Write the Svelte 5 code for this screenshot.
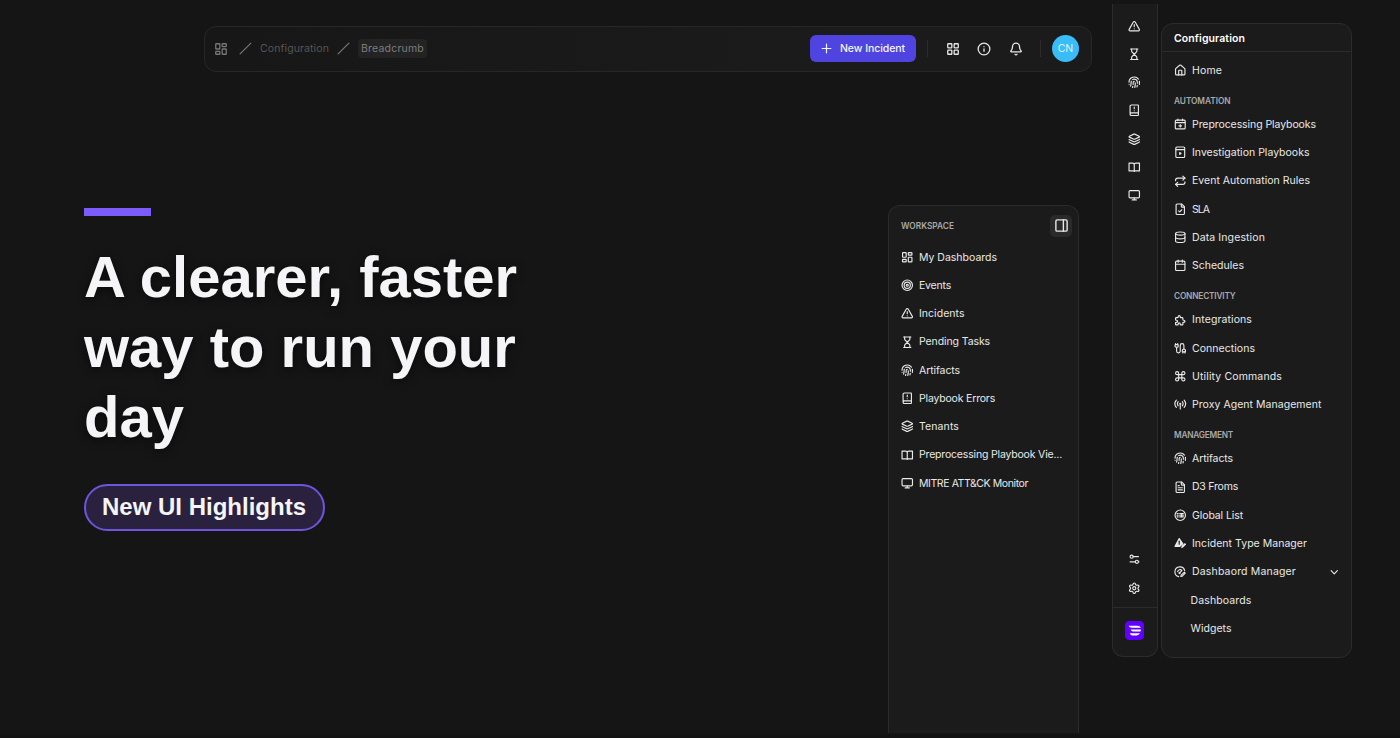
<script lang="ts">
	interface Item {
		icon?: string;
		label: string;
		width: number;
		chevron?: boolean;
	}

	interface Group {
		title?: string;
		titleWidth?: number;
		items: Item[];
	}

	const icons: Record<string, string> = {
		dashboard:
			'<rect width="7" height="9" x="3" y="3" rx="1"/><rect width="7" height="5" x="14" y="3" rx="1"/><rect width="7" height="9" x="14" y="12" rx="1"/><rect width="7" height="5" x="3" y="16" rx="1"/>',
		grid: '<rect width="7" height="7" x="3" y="3" rx="1"/><rect width="7" height="7" x="14" y="3" rx="1"/><rect width="7" height="7" x="14" y="14" rx="1"/><rect width="7" height="7" x="3" y="14" rx="1"/>',
		slash: '<path d="M22 2 2 22"/>',
		plus: '<path d="M4 12h16M12 4v16"/>',
		info: '<circle cx="12" cy="12" r="10"/><path d="M12 16v-4M12 8h.01"/>',
		bell: '<path d="M10.27 21a2 2 0 0 0 3.46 0"/><path d="M3.26 15.33A1 1 0 0 0 4 17h16a1 1 0 0 0 .74-1.67C19.41 13.96 18 12.5 18 8A6 6 0 0 0 6 8c0 4.5-1.41 5.96-2.74 7.33"/>',
		panel: '<rect width="18" height="18" x="3" y="3" rx="2"/><path d="M15 3v18"/>',
		target: '<circle cx="12" cy="12" r="10"/><circle cx="12" cy="12" r="6"/><circle cx="12" cy="12" r="2"/>',
		alert: '<path d="m21.73 18-8-14a2 2 0 0 0-3.48 0l-8 14A2 2 0 0 0 4 21h16a2 2 0 0 0 1.73-3"/><path d="M12 9v4M12 17h.01"/>',
		hourglass:
			'<path d="M5 22h14M5 2h14"/><path d="M17 22v-4.17a2 2 0 0 0-.59-1.42L12 12l-4.41 4.41A2 2 0 0 0 7 17.83V22M7 2v4.17a2 2 0 0 0 .59 1.42L12 12l4.41-4.41A2 2 0 0 0 17 6.17V2"/>',
		fingerprint:
			'<path d="M12 10a2 2 0 0 0-2 2c0 1.02-.1 2.51-.26 4"/><path d="M14 13.12c0 2.38 0 6.38-1 8.88"/><path d="M17.29 21.02c.12-.6.43-2.3.5-3.02"/><path d="M2 12a10 10 0 0 1 18-6"/><path d="M2 16h.01"/><path d="M21.8 16c.2-2 .131-5.354 0-6"/><path d="M5 19.5C5.5 18 6 15 6 12a6 6 0 0 1 .34-2"/><path d="M8.65 22c.21-.66.45-1.32.57-2"/><path d="M9 6.8a6 6 0 0 1 9 5.2v2"/>',
		bookAlert:
			'<path d="M12 13h.01M12 6v3"/><path d="M4 19.5v-15A2.5 2.5 0 0 1 6.5 2H19a1 1 0 0 1 1 1v18a1 1 0 0 1-1 1H6.5a1 1 0 0 1 0-5H20"/>',
		layers: '<path d="M12.83 2.18a2 2 0 0 0-1.66 0L2.6 6.08a1 1 0 0 0 0 1.83l8.58 3.91a2 2 0 0 0 1.66 0l8.58-3.9a1 1 0 0 0 0-1.83z"/><path d="M2 12a1 1 0 0 0 .58.91l8.6 3.91a2 2 0 0 0 1.65 0l8.58-3.9A1 1 0 0 0 22 12"/><path d="M2 17a1 1 0 0 0 .58.91l8.6 3.91a2 2 0 0 0 1.65 0l8.58-3.9A1 1 0 0 0 22 17"/>',
		book: '<path d="M12 6v14M2 4h7a3 3 0 0 1 3 3v13a2 2 0 0 0-2-1H2ZM22 4h-7a3 3 0 0 0-3 3v13a2 2 0 0 1 2-1h8Z"/>',
		monitor: '<rect width="20" height="14" x="2" y="3" rx="2"/><path d="M8 21h8M12 17v4"/>',
		home: '<path d="M15 21v-8a1 1 0 0 0-1-1h-4a1 1 0 0 0-1 1v8"/><path d="M3 10a2 2 0 0 1 .71-1.53l7-6a2 2 0 0 1 2.58 0l7 6A2 2 0 0 1 21 10v9a2 2 0 0 1-2 2H5a2 2 0 0 1-2-2z"/>',
		calendarPlay:
			'<rect width="19" height="17" x="2.500" y="4" rx="2"/><path d="M7.500 2v3M16.500 2v3M3 9h18"/><path d="M12 12.500v5M9.500 15h5"/>',
		bookPlay:
			'<rect width="17" height="20" x="3.500" y="2" rx="2"/><path d="M4 7h16"/><path d="m11 12.500 2.500 1.800-2.500 1.700z" fill="currentColor"/>',
		repeat: '<path d="m17 2 4 4-4 4"/><path d="M3 11v-1a4 4 0 0 1 4-4h14"/><path d="m7 22-4-4 4-4"/><path d="M21 13v1a4 4 0 0 1-4 4H3"/>',
		fileCheck:
			'<path d="M15 2H6a2 2 0 0 0-2 2v16a2 2 0 0 0 2 2h12a2 2 0 0 0 2-2V7Z"/><path d="M14 2v4a2 2 0 0 0 2 2h4"/><path d="m9 15 2 2 4-4"/>',
		database:
			'<ellipse cx="12" cy="5" rx="9" ry="3"/><path d="M3 5v14a9 3 0 0 0 18 0V5"/><path d="M3 12a9 3 0 0 0 18 0"/>',
		calendar: '<rect width="18" height="18" x="3" y="4" rx="2"/><path d="M8 2v4M16 2v4M3 10h18"/>',
		puzzle: '<path d="M4 7h3a1 1 0 0 0 1-1V5a2 2 0 0 1 4 0v1a1 1 0 0 0 1 1h3a1 1 0 0 1 1 1v3a1 1 0 0 0 1 1h1a2 2 0 0 1 0 4h-1a1 1 0 0 0-1 1v3a1 1 0 0 1-1 1h-3a1 1 0 0 1-1-1v-1a2 2 0 0 0-4 0v1a1 1 0 0 1-1 1H4a1 1 0 0 1-1-1v-3a1 1 0 0 1 1-1h1a2 2 0 0 0 0-4H4a1 1 0 0 1-1-1V8a1 1 0 0 1 1-1"/>',
		cable: '<path d="M17 19a1 1 0 0 1-1-1v-2a2 2 0 0 1 2-2h2a2 2 0 0 1 2 2v2a1 1 0 0 1-1 1z"/><path d="M17 21v-2M21 21v-2M3 5V3M7 5V3"/><path d="M19 14V6.500a3.500 3.500 0 0 0-7 0v11a3.500 3.500 0 0 1-7 0V10"/><path d="M4 10a2 2 0 0 1-2-2V6a1 1 0 0 1 1-1h4a1 1 0 0 1 1 1v2a2 2 0 0 1-2 2z"/>',
		command: '<path d="M15 6v12a3 3 0 1 0 3-3H6a3 3 0 1 0 3 3V6a3 3 0 1 0-3 3h12a3 3 0 1 0-3-3"/>',
		antenna:
			'<path d="M4.500 18C1.200 14 1.200 8 4.500 4M8 15c-1.600-2.200-1.600-5.800 0-8M16 15c1.600-2.200 1.600-5.800 0-8M19.500 18c3.300-4 3.300-10 0-14M12 12v9"/><circle cx="12" cy="11" r="1"/>',
		fileText:
			'<path d="M15 2H6a2 2 0 0 0-2 2v16a2 2 0 0 0 2 2h12a2 2 0 0 0 2-2V7Z"/><path d="M14 2v4a2 2 0 0 0 2 2h4M10 9H8M16 13H8M16 17H8"/>',
		globe: '<circle cx="12" cy="12" r="10"/><path d="M6 9h2M6 12h2M6 15h2M11 9h7M11 12h7M11 15h7M14.500 9v6"/>',
		alertEdit:
			'<path d="M10 3 2 18h9l6-5z" fill="currentColor"/><path d="M10 8v6" stroke="#1b1b1b"/><path d="m15 20 1-3 5-4 1 1-5 5z"/>',
		gaugeEdit:
			'<path d="M20.500 9A9.500 9.500 0 1 0 9 20.500"/><path d="M7 11a5 5 0 0 1 8-3M11 13l4-4"/><circle cx="10.500" cy="13.500" r="1"/><path d="m13 20 1-3 6-5 1.500 1.500-5.500 6z"/>',
		chevron: '<path d="m6 9 6 6 6-6"/>',
		sliders: '<path d="M20 7H10M14 17H4"/><circle cx="17" cy="17" r="3"/><circle cx="7" cy="7" r="3"/><path d="M20 17h1"/>',
		gear: '<path d="M9.671 4.136a2.340 2.340 0 0 1 4.659 0 2.340 2.340 0 0 0 3.319 1.915 2.340 2.340 0 0 1 2.330 4.033 2.340 2.340 0 0 0 0 3.831 2.340 2.340 0 0 1-2.330 4.033 2.340 2.340 0 0 0-3.319 1.915 2.340 2.340 0 0 1-4.659 0 2.340 2.340 0 0 0-3.320-1.915 2.340 2.340 0 0 1-2.330-4.033 2.340 2.340 0 0 0 0-3.831A2.340 2.340 0 0 1 6.350 6.051a2.340 2.340 0 0 0 3.319-1.915"/><circle cx="12" cy="12" r="3"/>'
	};

	const workspace: Item[] = [
		{ icon: 'dashboard', label: 'My Dashboards', width: 78 },
		{ icon: 'target', label: 'Events', width: 32 },
		{ icon: 'alert', label: 'Incidents', width: 45.5 },
		{ icon: 'hourglass', label: 'Pending Tasks', width: 71 },
		{ icon: 'fingerprint', label: 'Artifacts', width: 41 },
		{ icon: 'bookAlert', label: 'Playbook Errors', width: 76 },
		{ icon: 'layers', label: 'Tenants', width: 40 },
		{ icon: 'book', label: 'Preprocessing Playbook Vie...', width: 143 },
		{ icon: 'monitor', label: 'MITRE ATT&CK Monitor', width: 109 }
	];

	const groups: Group[] = [
		{ items: [{ icon: 'home', label: 'Home', width: 30 }] },
		{
			title: 'Automation',
			titleWidth: 56.5,
			items: [
				{ icon: 'calendarPlay', label: 'Preprocessing Playbooks', width: 124 },
				{ icon: 'bookPlay', label: 'Investigation Playbooks', width: 117.5 },
				{ icon: 'repeat', label: 'Event Automation Rules', width: 118 },
				{ icon: 'fileCheck', label: 'SLA', width: 17 },
				{ icon: 'database', label: 'Data Ingestion', width: 73 },
				{ icon: 'calendar', label: 'Schedules', width: 52 }
			]
		},
		{
			title: 'Connectivity',
			titleWidth: 61.5,
			items: [
				{ icon: 'puzzle', label: 'Integrations', width: 60 },
				{ icon: 'cable', label: 'Connections', width: 63 },
				{ icon: 'command', label: 'Utility Commands', width: 90 },
				{ icon: 'antenna', label: 'Proxy Agent Management', width: 129.5 }
			]
		},
		{
			title: 'Management',
			titleWidth: 59,
			items: [
				{ icon: 'fingerprint', label: 'Artifacts', width: 41 },
				{ icon: 'fileText', label: 'D3 Froms', width: 46 },
				{ icon: 'globe', label: 'Global List', width: 51 },
				{ icon: 'alertEdit', label: 'Incident Type Manager', width: 115 },
				{ icon: 'gaugeEdit', label: 'Dashbaord Manager', width: 104, chevron: true },
				{ label: 'Dashboards', width: 61 },
				{ label: 'Widgets', width: 41 }
			]
		}
	];

	const railTop = ['alert', 'hourglass', 'fingerprint', 'bookAlert', 'layers', 'book', 'monitor'];
	const railBottom = ['sliders', 'gear'];

	// Spread the tracking so a label takes up the given width
	function fit(node: HTMLElement, width: number) {
		const natural = node.getBoundingClientRect().width;
		const count = node.textContent?.length ?? 1;
		node.style.letterSpacing = `${(width - natural) / count}px`;
	}
</script>

{#snippet icon(name: string)}
	<svg class="icon icon--{name}" viewBox="0 0 24 24" aria-hidden="true">{@html icons[name]}</svg>
{/snippet}

{#snippet row(item: Item)}
	<li class="row" class:row--sub={!item.icon}>
		{#if item.icon}{@render icon(item.icon)}{/if}
		<span class="label" use:fit={item.width}>{item.label}</span>
		{#if item.chevron}<span class="caret">{@render icon('chevron')}</span>{/if}
	</li>
{/snippet}

<div class="stage">
	<div class="main">
		<header class="topbar">
			<nav class="crumbs">
				{@render icon('dashboard')}
				{@render icon('slash')}
				<span class="crumb"><span use:fit={69}>Configuration</span></span>
				{@render icon('slash')}
				<span class="crumb crumb--current"><span use:fit={63}>Breadcrumb</span></span>
			</nav>
			<div class="actions">
				<button class="new">{@render icon('plus')}<span use:fit={65}>New Incident</span></button>
				<i class="divider"></i>
				<div class="tools">
					{@render icon('grid')}
					{@render icon('info')}
					{@render icon('bell')}
				</div>
				<i class="divider"></i>
				<span class="avatar">CN</span>
			</div>
		</header>

		<div class="content">
			<section class="hero">
				<div class="accent"></div>
				<h1>A clearer, faster<br />way to run your<br />day</h1>
				<span class="pill">New UI Highlights</span>
			</section>

			<aside class="workspace">
				<div class="workspace-head">
					<h3><span use:fit={53}>Workspace</span></h3>
					<button class="toggle" aria-label="Toggle panel">{@render icon('panel')}</button>
				</div>
				<ul>
					{#each workspace as item}
						{@render row(item)}
					{/each}
				</ul>
			</aside>
		</div>
	</div>

	<aside class="rail">
		<div class="rail-icons">
			{#each railTop as name}
				<span class="rail-item">{@render icon(name)}</span>
			{/each}
		</div>
		<div class="rail-icons">
			{#each railBottom as name}
				<span class="rail-item">{@render icon(name)}</span>
			{/each}
		</div>
		<div class="rail-foot">
			<svg class="logo" viewBox="0 0 20 20" aria-hidden="true">
				<rect width="20" height="20" rx="4.500" />
				<path d="M3.800 5h9.200q3 0 3.700 2.200H7Q4.800 7.200 3.800 5ZM6 9h10.800q0 1.400-.7 2.100H8.500Q6.500 11.100 6 9ZM5 13h10.700q-.9 2.200-3.500 2.200H7.500Q5.700 15.200 5 13Z" />
			</svg>
		</div>
	</aside>

	<aside class="config">
		<h2><span use:fit={71}>Configuration</span></h2>
		<div class="groups">
			{#each groups as group}
				{#if group.title}
					<h3><span use:fit={group.titleWidth ?? 0}>{group.title}</span></h3>
				{/if}
				<ul>
					{#each group.items as item}
						{@render row(item)}
					{/each}
				</ul>
			{/each}
		</div>
	</aside>
</div>

<style>
	:global(body) {
		margin: 0;
		background: #151515;
	}

	.stage {
		box-sizing: border-box;
		display: flex;
		width: 1400px;
		height: 738px;
		overflow: hidden;
		background: linear-gradient(#151515 733px, #121212 736px);
		color: #e9e9e9;
		font-family: Inter, 'Liberation Sans', sans-serif;
		font-size: 10.5px;
	}

	.stage :global(*) {
		box-sizing: border-box;
	}

	ul {
		margin: 0;
		padding: 0;
		list-style: none;
	}

	button {
		border: 0;
		padding: 0;
		font: inherit;
		color: inherit;
	}

	.icon {
		flex: none;
		width: 12.5px;
		height: 12.5px;
		fill: none;
		stroke: currentColor;
		stroke-width: 2.2;
		stroke-linecap: round;
		stroke-linejoin: round;
	}

	.main {
		width: 1092px;
		padding-top: 26px;
	}

	.topbar {
		display: flex;
		align-items: center;
		justify-content: space-between;
		height: 46px;
		margin-left: 204px;
		padding: 0 12px 1px 9px;
		border: 1px solid #272727;
		border-radius: 12px;
		background: linear-gradient(90deg, #171717, #1b1b1b 70%);
	}

	.crumbs {
		display: flex;
		align-items: center;
		color: #555;
	}

	.crumbs .icon--dashboard {
		width: 14px;
		height: 14px;
		color: #777;
	}

	.crumbs .icon--slash {
		width: 13px;
		height: 13px;
		margin: 0 8px 0 11px;
		color: #777;
	}

	.crumb + .icon--slash {
		margin: 0 8px 0 8px;
	}

	.crumb--current {
		padding: 3px;
		border-radius: 4px;
		background: #232323;
		color: #7c7c7c;
	}

	.crumb {
		white-space: nowrap;
	}

	.actions {
		display: flex;
		align-items: center;
	}

	.new {
		display: flex;
		align-items: center;
		gap: 7px;
		width: 106px;
		height: 27px;
		padding-left: 10px;
		border-radius: 6px;
		background: #4f44e0;
		font-weight: 500;
		color: #f4f4ff;
		white-space: nowrap;
	}

	.new .icon {
		width: 13px;
		height: 13px;
	}

	.divider {
		width: 1px;
		height: 17px;
		margin: 0 11px;
		background: #2c2c2c;
	}

	.tools {
		display: flex;
		gap: 17.5px;
		padding: 0 6.5px;
	}

	.tools .icon {
		width: 14px;
		height: 14px;
	}

	.avatar {
		display: grid;
		place-items: center;
		width: 27px;
		height: 27px;
		border-radius: 50%;
		background: #38bdf8;
		color: #d9f2ff;
	}

	.content {
		display: flex;
		justify-content: space-between;
		padding: 133px 13px 0 84px;
	}

	.hero {
		padding-top: 3px;
		font-family: 'Liberation Sans', Arial, sans-serif;
		font-weight: 700;
		color: #f5f5f7;
	}

	.accent {
		width: 67px;
		height: 8px;
		background: #7c5cfa;
	}

	h1 {
		margin: 26px 0 32px;
		font-size: 58px;
		line-height: 70px;
		text-shadow: 0 2px 10px rgba(0, 0, 0, 0.6);
		white-space: nowrap;
	}

	.pill {
		display: inline-flex;
		align-items: center;
		height: 47px;
		padding: 0 17px 2px 16px;
		border: 2px solid #6f54dc;
		border-radius: 24px;
		background: #2a213f;
		font-size: 24px;
		white-space: nowrap;
	}

	.workspace,
	.config,
	.rail {
		border: 1px solid #2b2b2b;
		background: #1b1b1b;
	}

	.workspace {
		width: 191px;
		height: 528px;
		padding: 0 6px 0 12px;
		border-bottom: 0;
		border-radius: 12px 12px 0 0;
	}

	.workspace-head {
		display: flex;
		align-items: center;
		justify-content: space-between;
		height: 38px;
		margin-bottom: -1px;
		padding-top: 1px;
	}

	h3 {
		margin: 0;
		font-size: 8.3px;
		font-weight: 600;
		line-height: 12px;
		text-transform: uppercase;
		color: #a9a9a9;
	}

	.toggle {
		display: grid;
		place-items: center;
		width: 22px;
		height: 22px;
		border-radius: 5px;
		background: #2a2a2a;
	}

	.toggle .icon {
		width: 15px;
		height: 15px;
	}

	.row {
		display: flex;
		align-items: center;
		gap: 5.5px;
		height: 28.28px;
		white-space: nowrap;
	}

	.row--sub {
		padding-left: 16.5px;
	}

	.caret {
		display: flex;
		margin-left: auto;
	}

	.rail {
		display: flex;
		flex-direction: column;
		width: 46px;
		height: 653px;
		margin: 4px 0 0 20px;
		padding: 8px 1px 0 0;
		border-top: 0;
		border-radius: 0 0 11px 11px;
	}

	.rail-icons + .rail-icons {
		margin-top: auto;
		padding-bottom: 5px;
	}

	.rail-item {
		display: grid;
		place-items: center;
		height: 28.2px;
	}

	.rail-foot {
		display: grid;
		place-items: center;
		height: 49px;
		margin-right: -1px;
		padding: 0 1px 3px 0;
		border-top: 1px solid #2b2b2b;
	}

	.logo {
		width: 19px;
		height: 19px;
	}

	.logo rect {
		fill: #6200ff;
	}

	.logo path {
		fill: #fff;
	}

	.config {
		width: 191px;
		height: 634.5px;
		margin: 23px 0 0 3px;
		border-radius: 12px;
	}

	h2 {
		height: 28px;
		margin: 0;
		padding: 1px 0 0 12px;
		border-bottom: 1px solid #2b2b2b;
		font-size: 10.5px;
		font-weight: 600;
		line-height: 28px;
		color: #fff;
	}

	.groups {
		padding: 4px 11px 0 12px;
	}

	.groups h3 {
		height: 25.9px;
		padding-top: 10.5px;
	}
</style>
